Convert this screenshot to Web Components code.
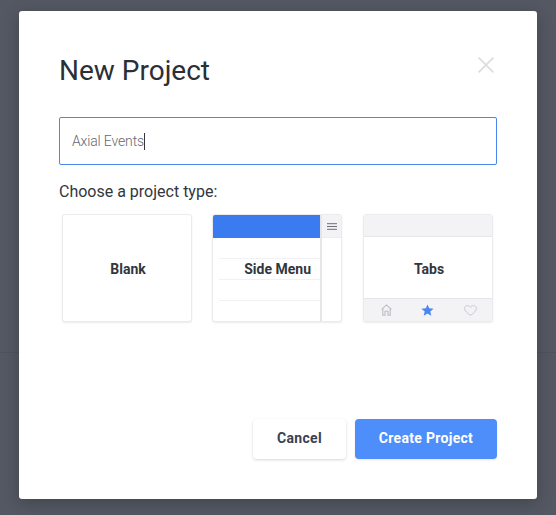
<!DOCTYPE html>
<html>
<head>
<meta charset="utf-8">
<style>
  html, body { margin: 0; height: 515px; overflow: hidden; background: #545862; }
  body { font-family: Roboto, "Liberation Sans", sans-serif; }
</style>
</head>
<body>
<new-project-modal>
  <span slot="title">New Project</span>
  <project-input value="Axial Events"></project-input>
  <span slot="label">Choose a project type:</span>
  <project-type kind="blank">Blank</project-type>
  <project-type kind="sidemenu">Side Menu</project-type>
  <project-type kind="tabs">Tabs</project-type>
  <modal-button slot="actions">Cancel</modal-button>
  <modal-button slot="actions" primary>Create Project</modal-button>
</new-project-modal>

<script>
//Modal wrapper
//
class NewProjectModal extends HTMLElement {
  constructor() {
    super();
    this.attachShadow({mode: 'open'}).innerHTML = `
      <style>
        :host {
          display: block;
          height: 515px;
          box-sizing: border-box;
          padding: 11px 19px 16px;
          background: linear-gradient(#545862 352px, #4e525b 352px, #4e525b 353px, #545862 353px);
        }
        .modal {
          height: 488px;
          box-sizing: border-box;
          padding: 40px 40px 40px;
          display: flex;
          flex-direction: column;
          background: #fff;
          border-radius: 3px;
          box-shadow: 0 4px 16px rgba(0,0,0,.22);
        }
        header {
          display: flex;
          justify-content: space-between;
          height: 66px;
          padding-top: 1px;
          box-sizing: border-box;
          color: #2b2f36;
          font-size: 28px;
          line-height: 38px;
        }
        header svg { margin: 5px 3px 0 0; }
        .label {
          margin-top: 16px;
          height: 33px;
          color: #32363d;
          font-size: 16px;
          line-height: 22px;
        }
        .types {
          display: grid;
          grid-template-columns: 150px 151px 130px;
          justify-items: start;
          padding-left: 3px;
        }
        .actions {
          margin-top: auto;
          display: flex;
          justify-content: flex-end;
          gap: 9px;
        }
      </style>
      <div class="modal">
        <header>
          <slot name="title"></slot>
          <svg width="16" height="16" viewBox="0 0 16 16"><path d="M.6 .6L15.4 15.4M15.4 .6L.6 15.4" stroke="#dcdde0" stroke-width="1.8" fill="none"/></svg>
        </header>
        <slot></slot>
        <div class="label"><slot name="label"></slot></div>
        <div class="types"><slot name="types"></slot></div>
        <div class="actions"><slot name="actions"></slot></div>
      </div>
    `;
  }

  connectedCallback() {
    this.querySelectorAll('project-type').forEach(el => el.setAttribute('slot', 'types'));
  }
}
customElements.define('new-project-modal', NewProjectModal);

//Name input, focused
//
class ProjectInput extends HTMLElement {
  constructor() {
    super();
    this.attachShadow({mode: 'open'});
  }

  connectedCallback() {
    this.shadowRoot.innerHTML = `
      <style>
        :host {
          display: flex;
          align-items: center;
          height: 48px;
          box-sizing: border-box;
          padding: 0 12px;
          border: 1px solid #4a86f0;
          border-radius: 2px;
          color: #66686e;
          font-size: 14px;
          font-weight: 300;
          letter-spacing: -.15px;
        }
        i { width: 1px; height: 17px; background: #33363c; }
      </style>
      <span>${this.getAttribute('value')}</span><i></i>
    `;
  }
}
customElements.define('project-input', ProjectInput);

//Project type card
//
const typeArt = {
  blank: '',
  sidemenu: `
    <div class="main">
      <div class="bar"></div>
      <div class="rows"><b></b><b></b><b></b></div>
    </div>
    <div class="side">
      <div class="burger">
        <svg width="10" height="7" viewBox="0 0 10 7"><path d="M0 .7H10M0 3.5H10M0 6.3H10" stroke="#6d7078" stroke-width="1"/></svg>
      </div>
    </div>`,
  tabs: `
    <div class="tabs-wrap">
      <div class="tabs-top"></div>
      <div class="tabs-mid"></div>
      <div class="tabs-bottom">
        <svg width="11" height="12" viewBox="0 0 11 12"><path d="M.6 5.4L5.5 .9L10.4 5.4M1.8 4.4V11.2H4V7.2H7V11.2H9.2V4.4" fill="none" stroke="#bcbdc2" stroke-width="1.1"/></svg>
        <svg width="13" height="12" viewBox="0 0 13 12"><path d="M6.5 .4L8.2 4.3L12.6 4.7L9.3 7.5L10.3 11.7L6.5 9.5L2.7 11.7L3.7 7.5L.4 4.7L4.8 4.3Z" fill="#4a86f0"/></svg>
        <svg width="13" height="11" viewBox="0 0 13 11"><path d="M6.5 10.3C3 7.8 .6 5.9 .6 3.5C.6 1.8 1.9 .6 3.4 .6C4.7 .6 5.8 1.3 6.5 2.4C7.2 1.3 8.3 .6 9.6 .6C11.1 .6 12.4 1.8 12.4 3.5C12.4 5.9 10 7.8 6.5 10.3Z" fill="none" stroke="#c4c5ca" stroke-width=".9"/></svg>
      </div>
    </div>`
};

class ProjectType extends HTMLElement {
  constructor() {
    super();
    this.attachShadow({mode: 'open'});
  }

  connectedCallback() {
    this.shadowRoot.innerHTML = `
      <style>
        :host {
          position: relative;
          width: 130px;
          height: 108px;
          box-sizing: border-box;
          display: flex;
          border: 1px solid #ebebef;
          border-radius: 3px;
          box-shadow: 0 1px 2px rgba(0,0,0,.08);
          overflow: hidden;
          background: #fff;
        }
        .name {
          position: absolute;
          inset: 0;
          display: flex;
          align-items: center;
          justify-content: center;
          padding: 2px 0 0 2px;
          color: #32363e;
          font-size: 14px;
          font-weight: 700;
        }
        :host([kind=sidemenu]) .name { justify-content: flex-end; padding: 2px 30px 0 0; }
        .main { width: 107px; display: flex; flex-direction: column; }
        .bar { height: 23px; background: #3a7bf0; }
        .rows { padding: 20px 0 0 6px; }
        .rows b { display: block; height: 20px; border-top: 1px solid #f1f1f4; }
        .side { flex: 1; border-left: 2px solid #e6e6ea; }
        .burger { height: 23px; display: flex; align-items: center; justify-content: center; background: #f3f3f6; border-bottom: 1px solid #ececf0; box-sizing: border-box; }
        .tabs-wrap { flex: 1; display: flex; flex-direction: column; }
        .tabs-top { height: 22px; box-sizing: border-box; background: #f3f3f6; border-bottom: 1px solid #e6e6ea; }
        .tabs-mid { flex: 1; }
        .tabs-bottom {
          height: 23px;
          box-sizing: border-box;
          display: flex;
          align-items: center;
          justify-content: space-around;
          padding-left: 2px;
          background: #f3f3f6;
          border-top: 1px solid #e6e6ea;
        }
      </style>
      ${typeArt[this.getAttribute('kind')]}
      <div class="name"><slot></slot></div>
    `;
  }
}
customElements.define('project-type', ProjectType);

//Footer button
//
class ModalButton extends HTMLElement {
  constructor() {
    super();
    this.attachShadow({mode: 'open'}).innerHTML = `
      <style>
        :host {
          display: flex;
          align-items: center;
          justify-content: center;
          height: 40px;
          width: 93px;
          box-sizing: border-box;
          padding-bottom: 2px;
          border-radius: 4px;
          background: #fff;
          color: #3b4152;
          font-size: 14px;
          font-weight: 700;
          letter-spacing: .3px;
          box-shadow: 0 1px 3px rgba(0,0,0,.16);
        }
        :host([primary]) {
          width: 142px;
          background: #4d8efa;
          color: #fff;
          box-shadow: 0 1px 2px rgba(0,0,0,.1);
        }
      </style>
      <slot></slot>
    `;
  }
}
customElements.define('modal-button', ModalButton);
</script>
</body>
</html>
